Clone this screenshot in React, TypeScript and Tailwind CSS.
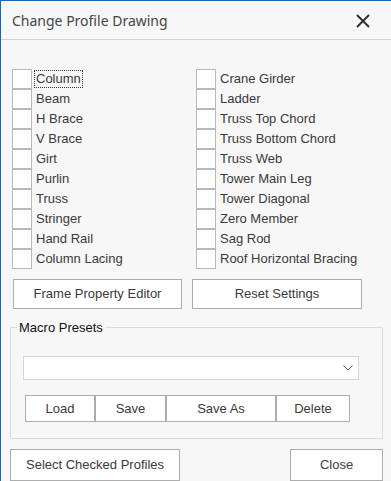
import { useState } from 'react';

const LEFT = ['Column', 'Beam', 'H Brace', 'V Brace', 'Girt', 'Purlin', 'Truss', 'Stringer', 'Hand Rail', 'Column Lacing'];
const RIGHT = [
  'Crane Girder',
  'Ladder',
  'Truss Top Chord',
  'Truss Bottom Chord',
  'Truss Web',
  'Tower Main Leg',
  'Tower Diagonal',
  'Zero Member',
  'Sag Rod',
  'Roof Horizontal Bracing',
];

const font = { fontFamily: '"Liberation Sans", Arial, sans-serif' };

const CheckRow = ({ label, focused }: { label: string; focused?: boolean }) => {
  const [checked, setChecked] = useState(false);
  return (
    <label className="flex h-[20px] items-center cursor-default select-none">
      <span
        onClick={() => setChecked(!checked)}
        className="flex h-[20px] w-[20px] shrink-0 items-center justify-center border border-[#b9b9b9] bg-white text-[12px] leading-none text-[#333]"
      >
        {checked ? '✓' : ''}
      </span>
      <span
        className={
          'ml-[3px] px-[1px] text-[13px] leading-[16px] text-[#3a3a3a] ' +
          (focused ? 'outline outline-1 outline-dotted outline-[#333]' : '')
        }
      >
        {label}
      </span>
    </label>
  );
};

const Btn = ({ children, className }: { children: React.ReactNode; className?: string }) => (
  <button
    className={
      'flex items-center justify-center border border-[#adadad] bg-white text-[13px] text-[#3a3a3a] ' + (className ?? '')
    }
  >
    {children}
  </button>
);

export default function App() {
  return (
    <div
      style={font}
      className="flex h-[481px] w-[391px] flex-col overflow-hidden border-l border-t border-[#1c63b7] bg-[#f7f7f7]"
    >
      {/* title bar */}
      <div className="flex h-[39px] items-center justify-between border-b border-[#d2d2d2] pl-[11px] pr-[21px]">
        <span
          className="text-[14px] text-[#444]"
          style={{ fontFamily: '"Noto Sans", "Open Sans", sans-serif' }}
        >
          Change Profile Drawing
        </span>
        <svg width="14" height="14" viewBox="0 0 14 14" className="mt-[1px]">
          <path d="M1 1 L13 13 M13 1 L1 13" stroke="#2b2b2b" strokeWidth="1.8" />
        </svg>
      </div>

      {/* checkboxes */}
      <div className="flex pl-[11px] pt-[29px]">
        <div className="flex w-[184px] flex-col">
          {LEFT.map((l, i) => (
            <CheckRow key={l} label={l} focused={i === 0} />
          ))}
        </div>
        <div className="flex flex-col">
          {RIGHT.map((l) => (
            <CheckRow key={l} label={l} />
          ))}
        </div>
      </div>

      {/* editor buttons */}
      <div className="mt-[10px] flex gap-[10px] pl-[12px]">
        <Btn className="h-[30px] w-[169px]">Frame Property Editor</Btn>
        <Btn className="h-[30px] w-[170px]">Reset Settings</Btn>
      </div>

      {/* macro presets */}
      <fieldset className="mx-[9px] mt-[11px] w-[373px] border border-[#dadada] pb-[16px]">
        <legend className="ml-[6px] px-[2px] text-[13px] leading-[15px] text-[#111]">Macro Presets</legend>
        <div className="ml-[12px]">
          <div className="mt-[21px] flex h-[24px] w-[336px] items-center justify-end border border-[#d4d4d4] bg-white pr-[5px]">
            <svg width="10" height="6" viewBox="0 0 10 6">
              <path d="M0.5 0.5 L5 5 L9.5 0.5" fill="none" stroke="#555" strokeWidth="1" />
            </svg>
          </div>
          <div className="ml-[2px] mt-[15px] flex">
            <Btn className="h-[27px] w-[70px]">Load</Btn>
            <Btn className="h-[27px] w-[71px]">Save</Btn>
            <Btn className="h-[27px] w-[110px]">Save As</Btn>
            <Btn className="h-[27px] w-[74px]">Delete</Btn>
          </div>
        </div>
      </fieldset>

      {/* footer */}
      <div className="mt-[10px] flex justify-between pl-[9px] pr-[8px]">
        <Btn className="h-[32px] w-[170px]">Select Checked Profiles</Btn>
        <Btn className="h-[32px] w-[93px]">Close</Btn>
      </div>
    </div>
  );
}
